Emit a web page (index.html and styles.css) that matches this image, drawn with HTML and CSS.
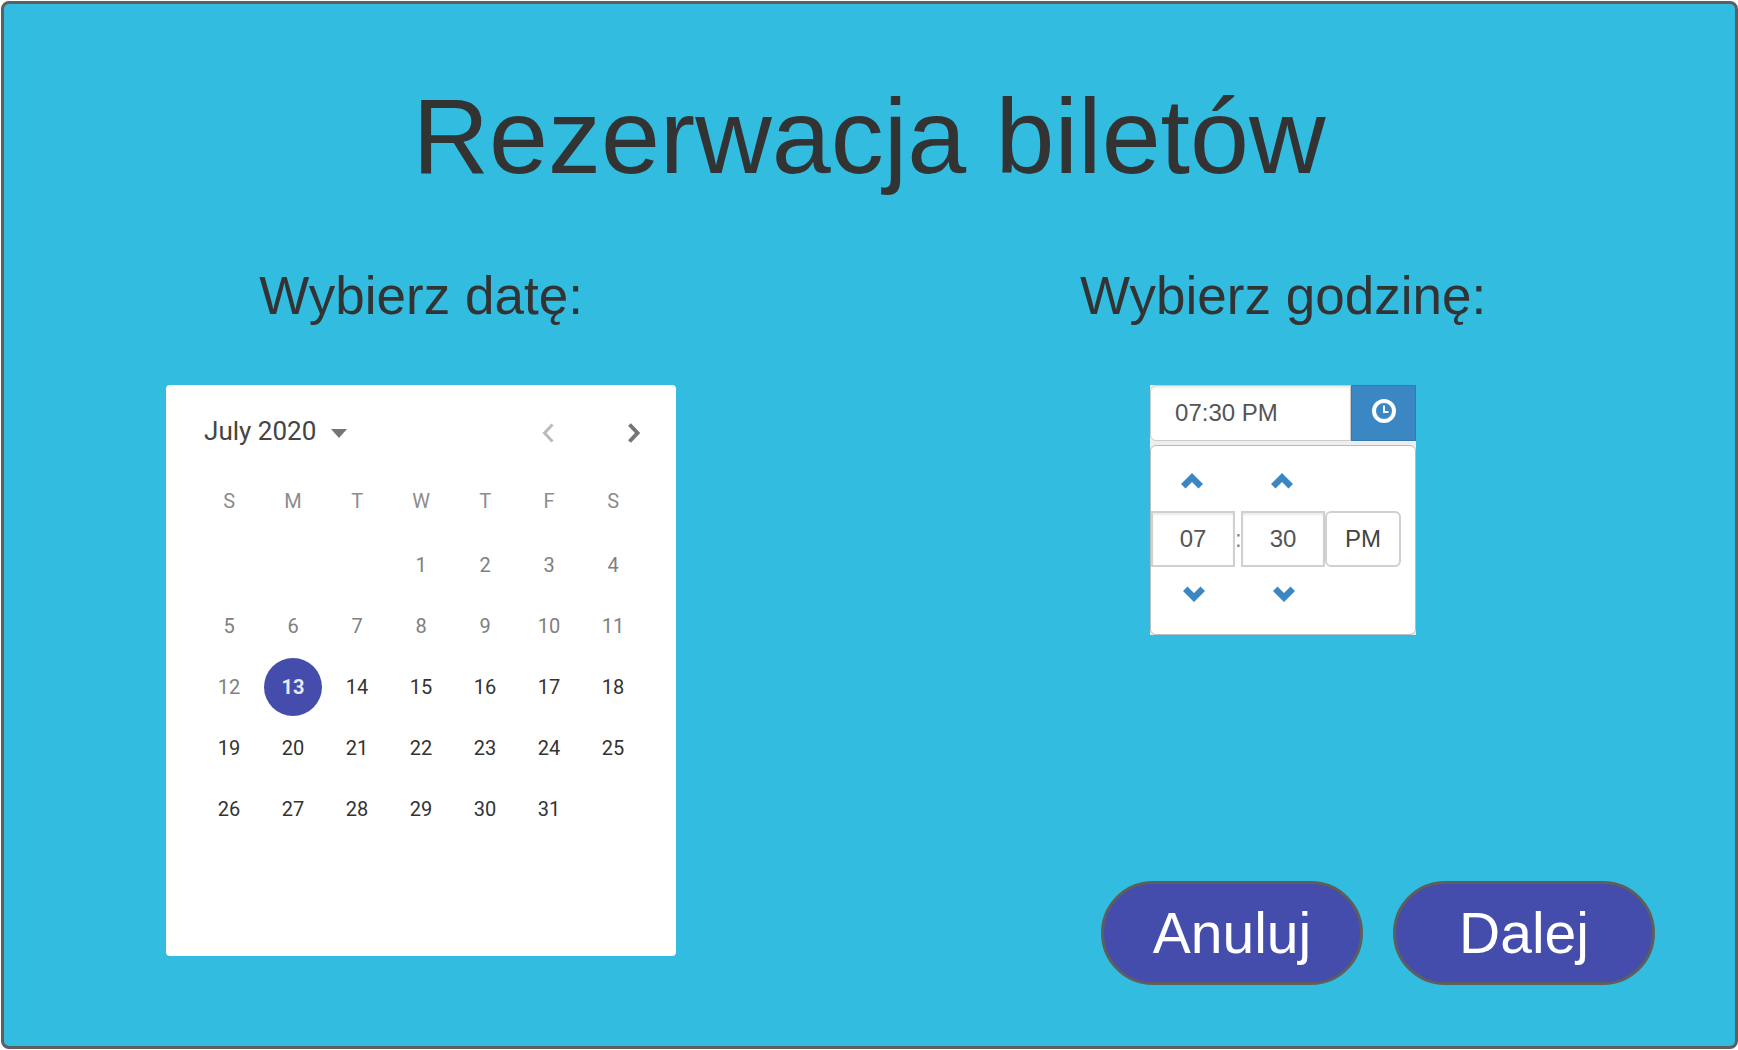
FILE: index.html
```html
<!DOCTYPE html>
<html lang="pl">
<head>
<meta charset="utf-8">
<title>Rezerwacja biletów</title>
<link rel="stylesheet" href="styles.css">
</head>
<body>
<main class="screen">
  <h1 class="title">Rezerwacja biletów</h1>
  <form class="booking">
    <section class="column">
      <h2 class="heading" id="date-heading">Wybierz datę:</h2>
      <div class="calendar">
        <div class="calendar-bar">
          <button class="month" type="button">July 2020
            <svg class="caret" viewBox="0 0 16 9" aria-hidden="true"><path d="M0 0h16L8 9z"/></svg>
          </button>
          <div class="month-nav">
            <button class="nav-button nav-previous" type="button" aria-label="Previous month">
              <svg class="nav-icon" viewBox="0 0 12 20" aria-hidden="true"><path d="M10.500 1.500L2.500 10l8 8.500"/></svg>
            </button>
            <button class="nav-button" type="button" aria-label="Next month">
              <svg class="nav-icon" viewBox="0 0 12 20" aria-hidden="true"><path d="M1.500 1.500L9.500 10l-8 8.500"/></svg>
            </button>
          </div>
        </div>
        <table class="days" aria-labelledby="date-heading">
          <thead>
            <tr><th>S</th><th>M</th><th>T</th><th>W</th><th>T</th><th>F</th><th>S</th></tr>
          </thead>
          <tbody>
            <tr class="past"><td></td><td></td><td></td><td>1</td><td>2</td><td>3</td><td>4</td></tr>
            <tr class="past"><td>5</td><td>6</td><td>7</td><td>8</td><td>9</td><td>10</td><td>11</td></tr>
            <tr><td class="past">12</td><td><span class="selected">13</span></td><td>14</td><td>15</td><td>16</td><td>17</td><td>18</td></tr>
            <tr><td>19</td><td>20</td><td>21</td><td>22</td><td>23</td><td>24</td><td>25</td></tr>
            <tr><td>26</td><td>27</td><td>28</td><td>29</td><td>30</td><td>31</td><td></td></tr>
          </tbody>
        </table>
      </div>
    </section>
    <section class="column">
      <h2 class="heading"><label for="time">Wybierz godzinę:</label></h2>
      <div class="timepicker">
        <div class="time-field">
          <input class="time-input" id="time" type="text" value="07:30 PM">
          <button class="time-button" type="button" aria-label="Clock">
            <svg class="clock" viewBox="0 0 24 24" aria-hidden="true"><circle cx="12" cy="12" r="10"/><path d="M12 6.500V13h4.500"/></svg>
          </button>
        </div>
        <div class="time-popup">
          <div class="spinner">
            <button class="step step-up" type="button" aria-label="Hour up"><svg class="chevron" viewBox="0 0 22 16" aria-hidden="true"><path d="M11 0L22 11l-4.500 4.500L11 9l-6.500 6.500L0 11z"/></svg></button>
            <input class="unit" type="text" value="07" aria-label="Hour">
            <button class="step step-down" type="button" aria-label="Hour down"><svg class="chevron" viewBox="0 0 22 16" aria-hidden="true"><path d="M11 16L22 5 17.500.500 11 7 4.500.500 0 5z"/></svg></button>
          </div>
          <span class="colon">:</span>
          <div class="spinner">
            <button class="step step-up" type="button" aria-label="Minute up"><svg class="chevron" viewBox="0 0 22 16" aria-hidden="true"><path d="M11 0L22 11l-4.500 4.500L11 9l-6.500 6.500L0 11z"/></svg></button>
            <input class="unit" type="text" value="30" aria-label="Minute">
            <button class="step step-down" type="button" aria-label="Minute down"><svg class="chevron" viewBox="0 0 22 16" aria-hidden="true"><path d="M11 16L22 5 17.500.500 11 7 4.500.500 0 5z"/></svg></button>
          </div>
          <button class="meridian" type="button">PM</button>
        </div>
      </div>
      <div class="actions">
        <button class="action" type="button">Anuluj</button>
        <button class="action" type="submit">Dalej</button>
      </div>
    </section>
  </form>
</main>
</body>
</html>
```
FILE: styles.css
```css
* {
  box-sizing: border-box;
}

body {
  margin: 0;
  padding: 1px 0 1px 1px;
  background: #fff;
  color: #333;
  font-family: "Liberation Sans", Arial, sans-serif;
}

button,
input {
  margin: 0;
  padding: 0;
  border: 0;
  background: none;
  color: inherit;
  font: inherit;
}

button {
  display: flex;
  align-items: center;
  justify-content: center;
  cursor: pointer;
}

.screen {
  min-height: calc(100vh - 2px);
  padding: 72px 7px 56px 0;
  border: 3px solid #5e5e5e;
  border-radius: 8px;
  background: #31bce0;
}

.title {
  margin: 0;
  padding-left: 6px;
  font-size: 106px;
  line-height: 120px;
  font-weight: 400;
  text-align: center;
}

.booking {
  display: grid;
  grid-template-columns: 15fr 16fr;
  padding-top: 68px;
}

.column {
  display: flex;
  flex-direction: column;
  align-items: center;
}

.heading {
  margin: 0 0 57px;
  font-size: 53px;
  line-height: 64px;
  font-weight: 400;
}

/* Calendar */

.calendar {
  width: 510px;
  min-height: 571px;
  padding: 21px 31px;
  border-radius: 4px;
  background: #fff;
  font-family: Roboto, sans-serif;
}

.calendar-bar {
  display: flex;
  align-items: center;
  justify-content: space-between;
  height: 50px;
  margin-bottom: 12px;
  padding: 0 0 0 7px;
}

.month {
  gap: 15px;
  color: #444;
  font-size: 26px;
}

.caret {
  width: 16px;
  height: 9px;
  margin-top: 4px;
  fill: #757575;
}

.month-nav {
  display: flex;
  gap: 64px;
}

.nav-button {
  width: 22px;
  height: 40px;
  padding-top: 4px;
}

.nav-icon {
  width: 12px;
  height: 20px;
  fill: none;
  stroke: #757575;
  stroke-width: 4;
}

.nav-previous .nav-icon {
  stroke: #bbb;
  stroke-width: 3;
}

.days {
  width: 100%;
  border-collapse: collapse;
  table-layout: fixed;
  color: #333;
  font-size: 20px;
  line-height: 24px;
  text-align: center;
}

.days th {
  height: 66px;
  padding: 0;
  color: #8c8c8c;
  font-weight: 400;
}

.days td {
  height: 61px;
  padding: 0;
}

.days .past {
  color: #808080;
}

.selected {
  display: block;
  width: 58px;
  margin: 0 auto;
  border-radius: 50%;
  background: #444dab;
  color: #e8e9f5;
  font-weight: 700;
  line-height: 58px;
}

/* Time picker */

.timepicker {
  width: 266px;
  background: #eee;
  color: #555;
  font-size: 24px;
}

.time-field {
  display: flex;
  height: 56px;
  margin-bottom: 4px;
}

.time-input {
  flex: 1;
  min-width: 0;
  padding: 0 24px;
  border: 1px solid #ccc;
  border-radius: 6px 0 0 6px;
  background: #fff;
  box-shadow: inset 0 2px 2px #ececec;
}

.time-button {
  width: 65px;
  padding-bottom: 4px;
  border: 1px solid #3379b5;
  background: #3b87c4;
}

.clock {
  width: 24px;
  height: 24px;
  fill: none;
  stroke: #fff;
  stroke-width: 4;
}

.clock path {
  stroke-width: 2;
}

.time-popup {
  display: flex;
  align-items: center;
  height: 190px;
  padding-bottom: 2px;
  border: 1px solid #bbb;
  border-radius: 6px;
  background: #fff;
}

.spinner {
  width: 84px;
}

.step {
  width: 100%;
  height: 60px;
}

.step-up {
  padding-right: 2px;
}

.step-down {
  padding: 0 0 6px 2px;
}

.chevron {
  width: 22px;
  height: 16px;
  fill: #3b87c4;
}

.unit {
  display: block;
  width: 100%;
  height: 56px;
  border: 2px solid #d0d0d0;
  text-align: center;
  box-shadow: inset 0 2px 2px #ececec;
}

.colon {
  width: 6px;
  color: #888;
}

.meridian {
  width: 76px;
  height: 56px;
  border: 2px solid #d0d0d0;
  border-radius: 6px;
  color: #444;
}

/* Bottom actions */

.actions {
  display: flex;
  align-self: flex-end;
  gap: 30px;
  margin-top: auto;
  padding: 246px 73px 0 0;
}

.action {
  width: 262px;
  height: 104px;
  border: 3px solid #5e5e5e;
  border-radius: 52px;
  background: #444dab;
  color: #fff;
  font-size: 57px;
}
```
